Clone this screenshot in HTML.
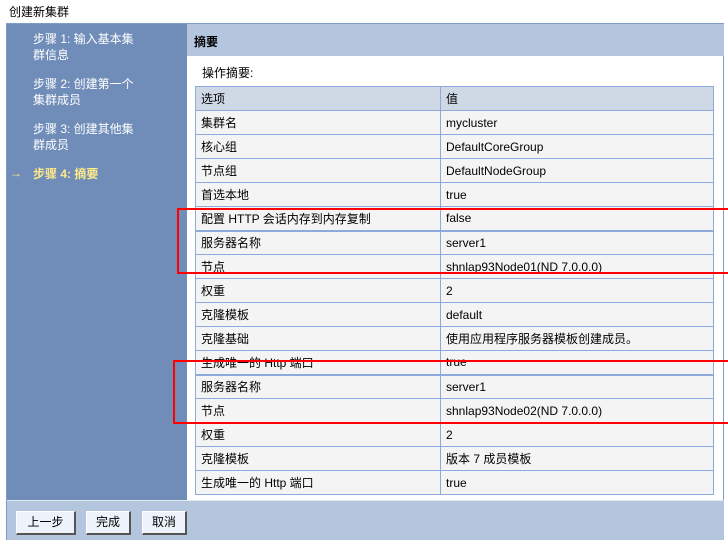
<!DOCTYPE html>
<html><head><meta charset="utf-8"><style>
*{margin:0;padding:0;box-sizing:border-box}
body{width:728px;height:546px;background:#fff;font-family:"Liberation Sans","Noto Sans CJK SC",sans-serif;font-size:12px;color:#000;position:relative;overflow:hidden}
.title{position:absolute;left:9px;top:3px;font-size:12px}
.panel{position:absolute;left:6px;top:23px;width:718px;height:517px;border:1px solid #7f9cc4;background:#fff}
.nav{position:absolute;left:0;top:0;width:180px;height:476px;background:#6f8db8;color:#fff}
.nav div{position:absolute;left:26px;width:110px;line-height:16px}
.hdr{position:absolute;left:180px;top:0;width:537px;height:32px;background:#b4c6de;font-weight:bold;padding:9px 0 0 7px}
.sub{position:absolute;left:195px;top:40px}
table{position:absolute;left:188px;top:62px;width:519px;border-collapse:collapse}
td{border:1px solid #8ea9dc;height:24px;padding:0 5px;background:#f4f4f4;white-space:nowrap}
tr.h td{background:#cfd9e6}
td.c1{width:245px}
tr.t td{border-top:2px solid #8ea9dc}
.bot{position:absolute;left:0;top:476px;width:717px;height:40px;background:#b4c6de;border-top:1px solid #e0e8f2}
.btn{position:absolute;top:10px;height:24px;background:#eef3fb;border:1px solid #fff;border-right:2px solid #555;border-bottom:2px solid #555;text-align:center;line-height:21px}
.red{position:absolute;border:2px solid #f00}
</style></head><body>
<div class="title">创建新集群</div>
<div class="panel">
<div class="nav">
<div style="top:7px">步骤 1: 输入基本集群信息</div>
<div style="top:52px">步骤 2: 创建第一个集群成员</div>
<div style="top:97px">步骤 3: 创建其他集群成员</div>
<div style="top:141px;left:3px;width:20px;color:#ffe98a;font-weight:bold">→</div>
<div style="top:142px;width:150px;color:#ffe98a;font-weight:bold">步骤 4: 摘要</div>
</div>
<div class="hdr">摘要</div>
<div class="sub">操作摘要:</div>
<table>
<tr class="h"><td class="c1">选项</td><td>值</td></tr>
<tr><td class="c1">集群名</td><td>mycluster</td></tr>
<tr><td class="c1">核心组</td><td>DefaultCoreGroup</td></tr>
<tr><td class="c1">节点组</td><td>DefaultNodeGroup</td></tr>
<tr><td class="c1">首选本地</td><td>true</td></tr>
<tr><td class="c1">配置 HTTP 会话内存到内存复制</td><td>false</td></tr>
<tr class="t"><td class="c1">服务器名称</td><td>server1</td></tr>
<tr><td class="c1">节点</td><td>shnlap93Node01(ND 7.0.0.0)</td></tr>
<tr><td class="c1">权重</td><td>2</td></tr>
<tr><td class="c1">克隆模板</td><td>default</td></tr>
<tr><td class="c1">克隆基础</td><td>使用应用程序服务器模板创建成员。</td></tr>
<tr><td class="c1">生成唯一的 Http 端口</td><td>true</td></tr>
<tr class="t"><td class="c1">服务器名称</td><td>server1</td></tr>
<tr><td class="c1">节点</td><td>shnlap93Node02(ND 7.0.0.0)</td></tr>
<tr><td class="c1">权重</td><td>2</td></tr>
<tr><td class="c1">克隆模板</td><td>版本 7 成员模板</td></tr>
<tr><td class="c1">生成唯一的 Http 端口</td><td>true</td></tr>
</table>
<div class="bot">
<div class="btn" style="left:9px;width:60px">上一步</div>
<div class="btn" style="left:79px;width:45px">完成</div>
<div class="btn" style="left:135px;width:45px">取消</div>
</div>
</div>
<div class="red" style="left:177px;top:208px;width:560px;height:66px"></div>
<div class="red" style="left:173px;top:360px;width:564px;height:64px"></div>
</body></html>
